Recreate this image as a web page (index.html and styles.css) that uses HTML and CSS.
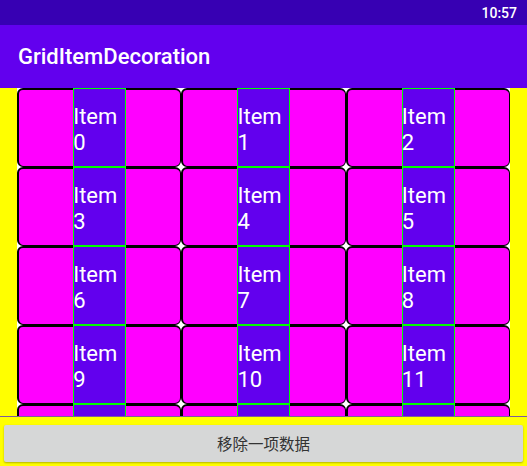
FILE: index.html
```html
<!DOCTYPE html>
<html>
<head>
<meta charset="utf-8">
<link rel="stylesheet" href="styles.css">
</head>
<body>
<div class="screen">
  <div class="status"><span class="time">10:57</span></div>
  <div class="appbar"><span class="title">GridItemDecoration</span></div>
  <div class="content">
    <div class="list">
      <div class="grid">
        <div class="cell"><div class="stripe"><span class="label">Item<br>0</span></div></div>
        <div class="cell"><div class="stripe"><span class="label">Item<br>1</span></div></div>
        <div class="cell"><div class="stripe"><span class="label">Item<br>2</span></div></div>
        <div class="cell"><div class="stripe"><span class="label">Item<br>3</span></div></div>
        <div class="cell"><div class="stripe"><span class="label">Item<br>4</span></div></div>
        <div class="cell"><div class="stripe"><span class="label">Item<br>5</span></div></div>
        <div class="cell"><div class="stripe"><span class="label">Item<br>6</span></div></div>
        <div class="cell"><div class="stripe"><span class="label">Item<br>7</span></div></div>
        <div class="cell"><div class="stripe"><span class="label">Item<br>8</span></div></div>
        <div class="cell"><div class="stripe"><span class="label">Item<br>9</span></div></div>
        <div class="cell"><div class="stripe"><span class="label">Item<br>10</span></div></div>
        <div class="cell"><div class="stripe"><span class="label">Item<br>11</span></div></div>
        <div class="cell"><div class="stripe"><span class="label">Item<br>12</span></div></div>
        <div class="cell"><div class="stripe"><span class="label">Item<br>13</span></div></div>
        <div class="cell"><div class="stripe"><span class="label">Item<br>14</span></div></div>
      </div>
    </div>
    <div class="divider"></div>
    <div class="footer">
      <button class="btn">移除一项数据</button>
    </div>
  </div>
</div>
</body>
</html>
```

FILE: styles.css
```css
* { box-sizing: border-box; }
html, body { margin: 0; padding: 0; }
body {
  width: 527px;
  height: 466px;
  overflow: hidden;
  font-family: Roboto, "Noto Sans", "Noto Sans CJK SC", sans-serif;
}
.screen {
  display: flex;
  flex-direction: column;
  height: 466px;
}
.status {
  height: 25px;
  background: #3700B3;
  display: flex;
  align-items: center;
  justify-content: flex-end;
  padding-right: 10px;
}
.time {
  color: #ffffff;
  font-size: 14px;
  font-weight: 500;
}
.appbar {
  height: 63px;
  background: #6200EE;
  display: flex;
  align-items: center;
  padding-left: 18px;
}
.title {
  color: #ffffff;
  font-size: 22px;
  font-weight: 500;
}
.content {
  flex: 1;
  background: #FFFF00;
  display: flex;
  flex-direction: column;
}
.list {
  height: 328px;
  padding: 0 17px;
  overflow: hidden;
}
.grid {
  background: #ffffff;
  display: grid;
  grid-template-columns: repeat(3, 1fr);
  grid-auto-rows: 79px;
}
.cell {
  background: #FF00FF;
  border-style: solid;
  border-color: #000000;
  border-width: 2px 1px 1px 2px;
  border-radius: 6px;
  display: flex;
  justify-content: center;
}
.stripe {
  width: 53px;
  height: 79px;
  margin-top: -2px;
  padding-top: 4px;
  background: #6200EE;
  box-shadow: inset 0 0 0 1px #00FF00;
  display: flex;
  align-items: center;
}
.label {
  color: #ffffff;
  font-size: 22px;
  line-height: 26px;
}
.divider {
  height: 1px;
  background: #7d5c9c;
}
.footer {
  flex: 1;
  padding: 8px 4px 4px;
  display: flex;
}
.btn {
  flex: 1;
  border: none;
  border-radius: 2px;
  background: #D6D7D7;
  box-shadow: 0 1px 2px rgba(0,0,0,0.3);
  color: #333333;
  font-family: "Noto Sans CJK SC", sans-serif;
  font-size: 15.5px;
  line-height: 37px;
  padding: 0;
}
```
